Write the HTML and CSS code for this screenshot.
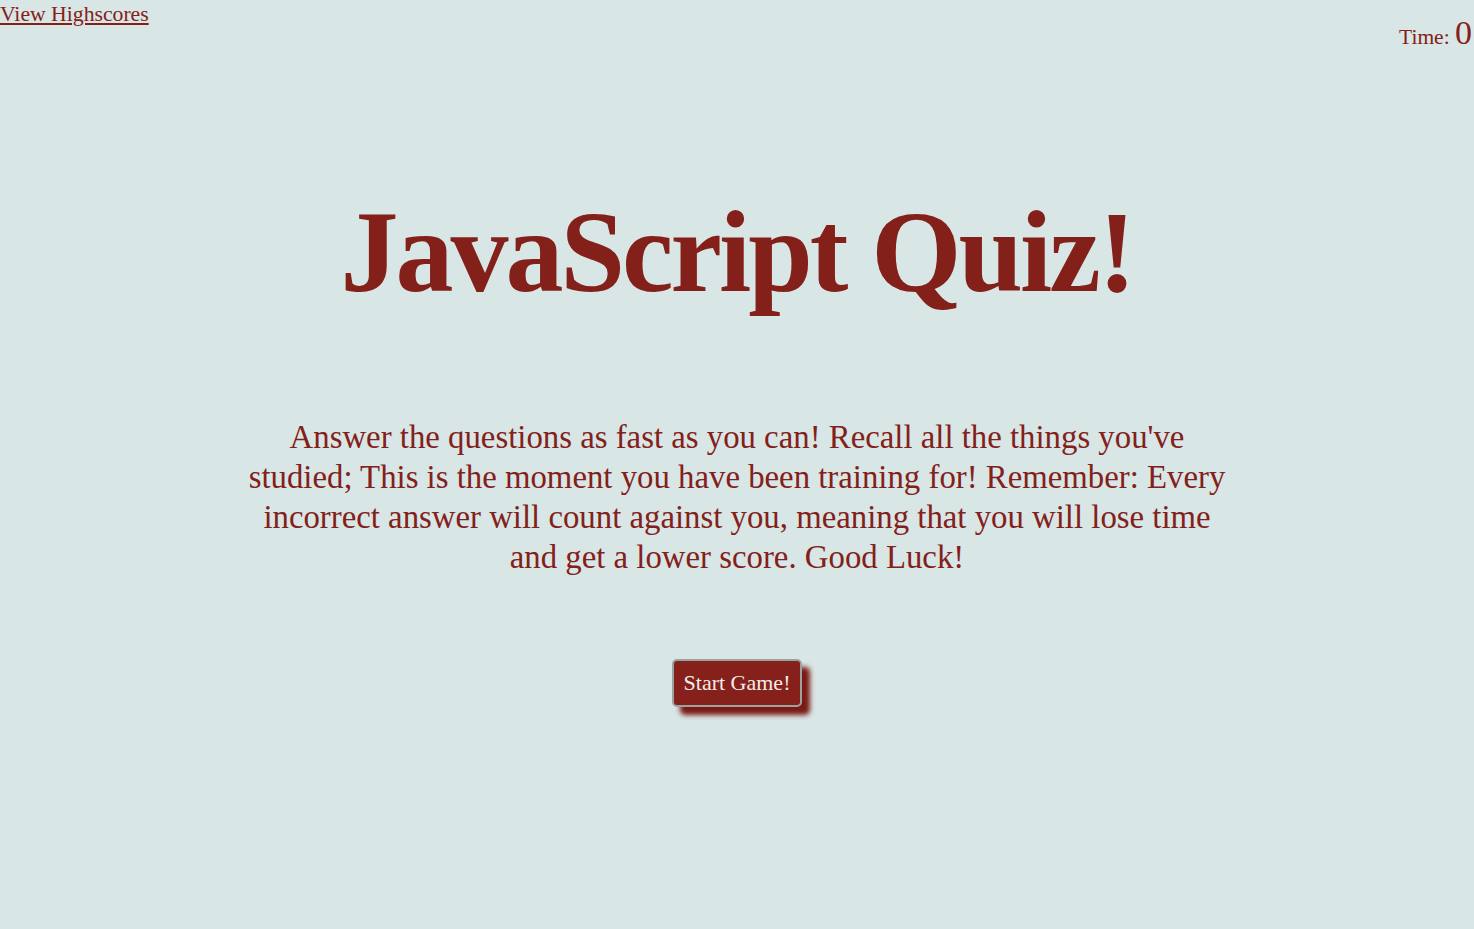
FILE: index.html
```html
<!DOCTYPE html>
<html>
<head>
<meta charset="utf-8">
<title>JavaScript Quiz</title>
<link rel="stylesheet" href="styles.css">
</head>
<body>
<header class="top-bar">
  <a class="highscores" href="#">View Highscores</a>
  <div class="timer">Time: <span class="time-value">0</span></div>
</header>
<main class="intro">
  <h1 class="title">JavaScript Quiz!</h1>
  <p class="description">Answer the questions as fast as you can! Recall all the things you've<br>studied; This is the moment you have been training for! Remember: Every<br>incorrect answer will count against you, meaning that you will lose time<br>and get a lower score. Good Luck!</p>
  <button class="start-btn" type="button">Start Game!</button>
</main>
</body>
</html>
```
FILE: styles.css
```css
html, body {
  margin: 0;
  padding: 0;
}
body {
  background: #d8e6e5;
  color: #84201a;
  font-family: "Liberation Serif", "DejaVu Serif", serif;
  min-height: 929px;
}
.top-bar {
  display: flex;
  justify-content: space-between;
  align-items: flex-start;
}
.highscores {
  color: #84201a;
  font-size: 21.7px;
  line-height: 28px;
  display: block;
}
.timer {
  font-size: 21.5px;
  line-height: 30px;
  margin-top: 18px;
  padding-right: 2px;
}
.time-value {
  font-size: 34px;
}
.intro {
  display: flex;
  flex-direction: column;
  align-items: center;
}
.title {
  font-size: 116px;
  font-weight: bold;
  margin: 137px 0 0 0;
  line-height: 1.1;
  letter-spacing: -3px;
}
.description {
  width: 1100px;
  text-align: center;
  font-size: 32.8px;
  line-height: 40px;
  margin: 100px 0 0 0;
}
.start-btn {
  margin-top: 82px;
  background: #86201a;
  color: #f2ecec;
  font-family: "Liberation Serif", "DejaVu Serif", serif;
  font-size: 22px;
  padding: 9px 10px;
  border: 2px solid #9aa3a2;
  border-radius: 5px;
  box-shadow: 8px 8px 5px #7a1a14;
}
```
